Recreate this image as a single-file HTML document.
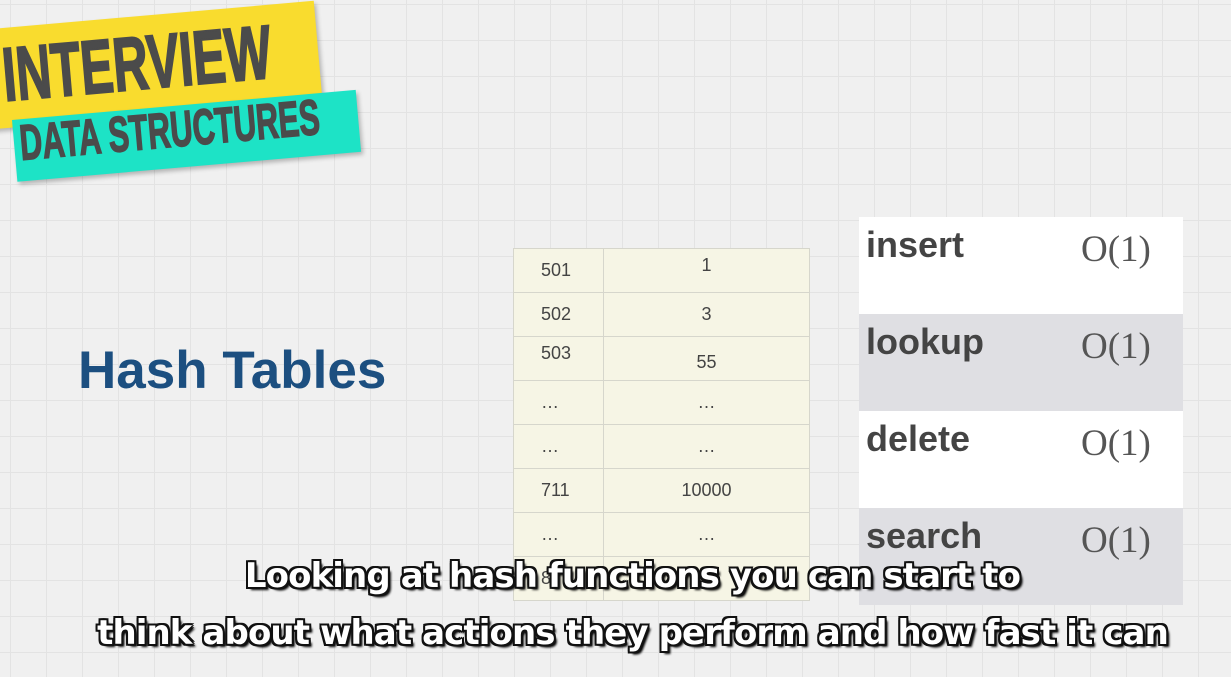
<!DOCTYPE html>
<html><head><meta charset="utf-8"><style>
*{margin:0;padding:0;box-sizing:border-box}
body{width:1231px;height:677px;overflow:hidden;position:relative;font-family:"Liberation Sans",sans-serif;
background-color:#f0f0f0;
background-image:linear-gradient(#e3e3e3 1px,transparent 1px),linear-gradient(90deg,#e3e3e3 1px,transparent 1px);
background-size:36px 36px;background-position:10px 4px}
.abs{position:absolute}
.yel{left:-20px;top:30px;width:335px;height:100px;background:#f9dc2e;transform:rotate(-5deg);transform-origin:0 0;box-shadow:2px 3px 4px rgba(0,0,0,.25)}
.t1{left:6px;top:38px;font:bold 76px/1 "Liberation Sans",sans-serif;color:#4b4b4b;transform:rotate(-5deg) scaleX(.64);transform-origin:0 100%;-webkit-text-stroke:2px #4b4b4b}
.cyan{left:12px;top:120px;width:345px;height:62px;background:#1de3c6;transform:rotate(-5deg);transform-origin:0 0;box-shadow:2px 3px 4px rgba(0,0,0,.25)}
.t2{left:22px;top:118px;font:bold 50px/1 "Liberation Sans",sans-serif;color:#4b4b4b;transform:rotate(-5deg) scaleX(.62);transform-origin:0 100%;-webkit-text-stroke:1.5px #4b4b4b}
.title{left:78px;top:344px;font:bold 53px/1 "Liberation Sans",sans-serif;color:#1c4f80}
table{position:absolute;left:513px;top:248px;width:297px;height:353px;border-collapse:collapse;background:#f6f5e5;border:1px solid #cfcfc5}
td{border:1px solid #d6d6cc;font-size:18px;color:#444;height:44px;text-align:center}
td:first-child{width:90px;text-align:left;padding-left:27px}
.panel{left:859px;top:217px;width:324px;height:388px}
.row{height:97px;position:relative}
.row b{position:absolute;left:7px;top:10px;font:bold 36px/1 "Liberation Sans",sans-serif;color:#444}
.row i{position:absolute;left:222px;top:14px;font:normal 37px/1 "Liberation Serif",serif;color:#555}
.sub{left:17px;width:1231px;text-align:center;font:bold 34px/1 "DejaVu Sans",sans-serif;color:#fff;letter-spacing:-0.9px;
text-shadow:-2px -2px 0 #111,2px -2px 0 #111,-2px 2px 0 #111,2px 2px 0 #111,0 2px 0 #111,0 -2px 0 #111,2px 0 0 #111,-2px 0 0 #111,3px 3px 2px #000}
</style></head><body>
<div class="abs yel"></div>
<div class="abs t1">INTERVIEW</div>
<div class="abs cyan"></div>
<div class="abs t2">DATA STRUCTURES</div>
<div class="abs title">Hash Tables</div>
<table>
<tr><td>501</td><td style="vertical-align:top;padding-top:6px">1</td></tr>
<tr><td>502</td><td>3</td></tr>
<tr><td style="vertical-align:top;padding-top:6px">503</td><td style="padding-top:8px">55</td></tr>
<tr><td>…</td><td>…</td></tr>
<tr><td>…</td><td>…</td></tr>
<tr><td>711</td><td>10000</td></tr>
<tr><td>…</td><td>…</td></tr>
<tr><td>8</td><td></td></tr>
</table>
<div class="abs panel">
<div class="row" style="background:#fff"><b>insert</b><i>O(1)</i></div>
<div class="row" style="background:#dfdfe3"><b>lookup</b><i>O(1)</i></div>
<div class="row" style="background:#fff"><b>delete</b><i>O(1)</i></div>
<div class="row" style="background:#dfdfe3"><b>search</b><i>O(1)</i></div>
</div>
<div class="abs sub" style="top:559px">Looking at hash functions you can start to</div>
<div class="abs sub" style="top:616px">think about what actions they perform and how fast it can</div>
</body></html>
